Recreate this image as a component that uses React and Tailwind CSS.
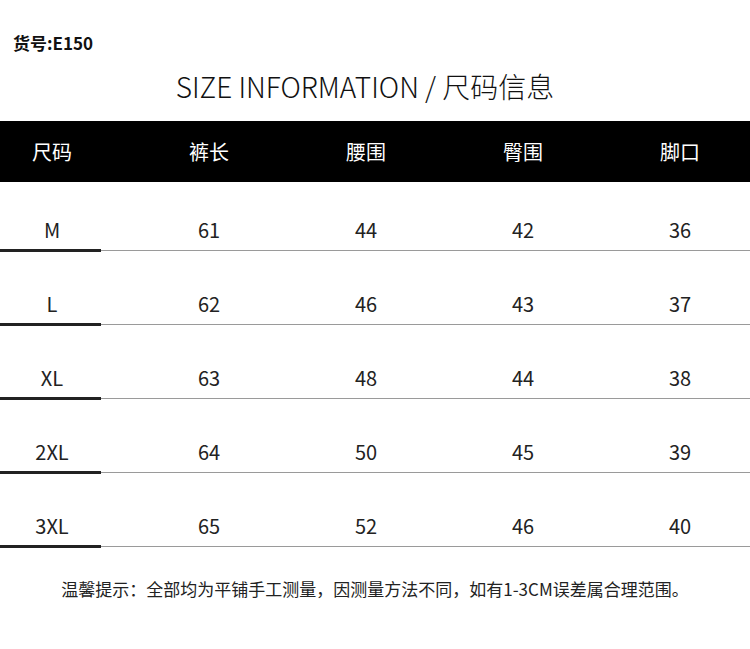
import React from 'react';

const headers = ['尺码', '裤长', '腰围', '臀围', '脚口'];

const rows = [
  ['M', '61', '44', '42', '36'],
  ['L', '62', '46', '43', '37'],
  ['XL', '63', '48', '44', '38'],
  ['2XL', '64', '50', '45', '39'],
  ['3XL', '65', '52', '46', '40'],
];

const font = "font-['Noto_Sans_CJK_SC','Noto_Sans',sans-serif]";

export default function App() {
  return (
    <div className={`h-[649px] w-[750px] overflow-hidden bg-white text-[#222] ${font}`}>
      <div className="px-[13px] pt-[32px] text-[17px] font-bold leading-[22px] text-[#111]">货号:E150</div>

      <h1 className="mt-[14px] pr-[20px] text-center text-[28px] font-light leading-[36px] text-[#111]">
        SIZE INFORMATION / 尺码信息
      </h1>

      <div className="mt-[17px] grid h-[61px] grid-cols-[repeat(5,104px)] items-center gap-x-[53px] bg-black text-white">
        {headers.map((h) => (
          <div key={h} className="text-center text-[20px] leading-6">
            {h}
          </div>
        ))}
      </div>

      <div className="flex flex-col gap-[40px] pt-[36px]">
        {rows.map((row) => (
          <div key={row[0]}>
            <div className="grid h-6 grid-cols-[repeat(5,104px)] items-center gap-x-[53px]">
              {row.map((cell, i) => (
                <div key={i} className="text-center text-[20px] leading-6 text-[#222]">
                  {cell}
                </div>
              ))}
            </div>
            <div className="mt-[7px] flex items-center">
              <div className="h-[3px] w-[101px] bg-[#222]" />
              <div className="h-px flex-1 bg-[#9a9a9a]" />
            </div>
          </div>
        ))}
      </div>

      <p className="mt-[29px] text-center text-[17px] leading-6 text-[#222]">
        温馨提示：全部均为平铺手工测量，因测量方法不同，如有1-3CM误差属合理范围。
      </p>
    </div>
  );
}
